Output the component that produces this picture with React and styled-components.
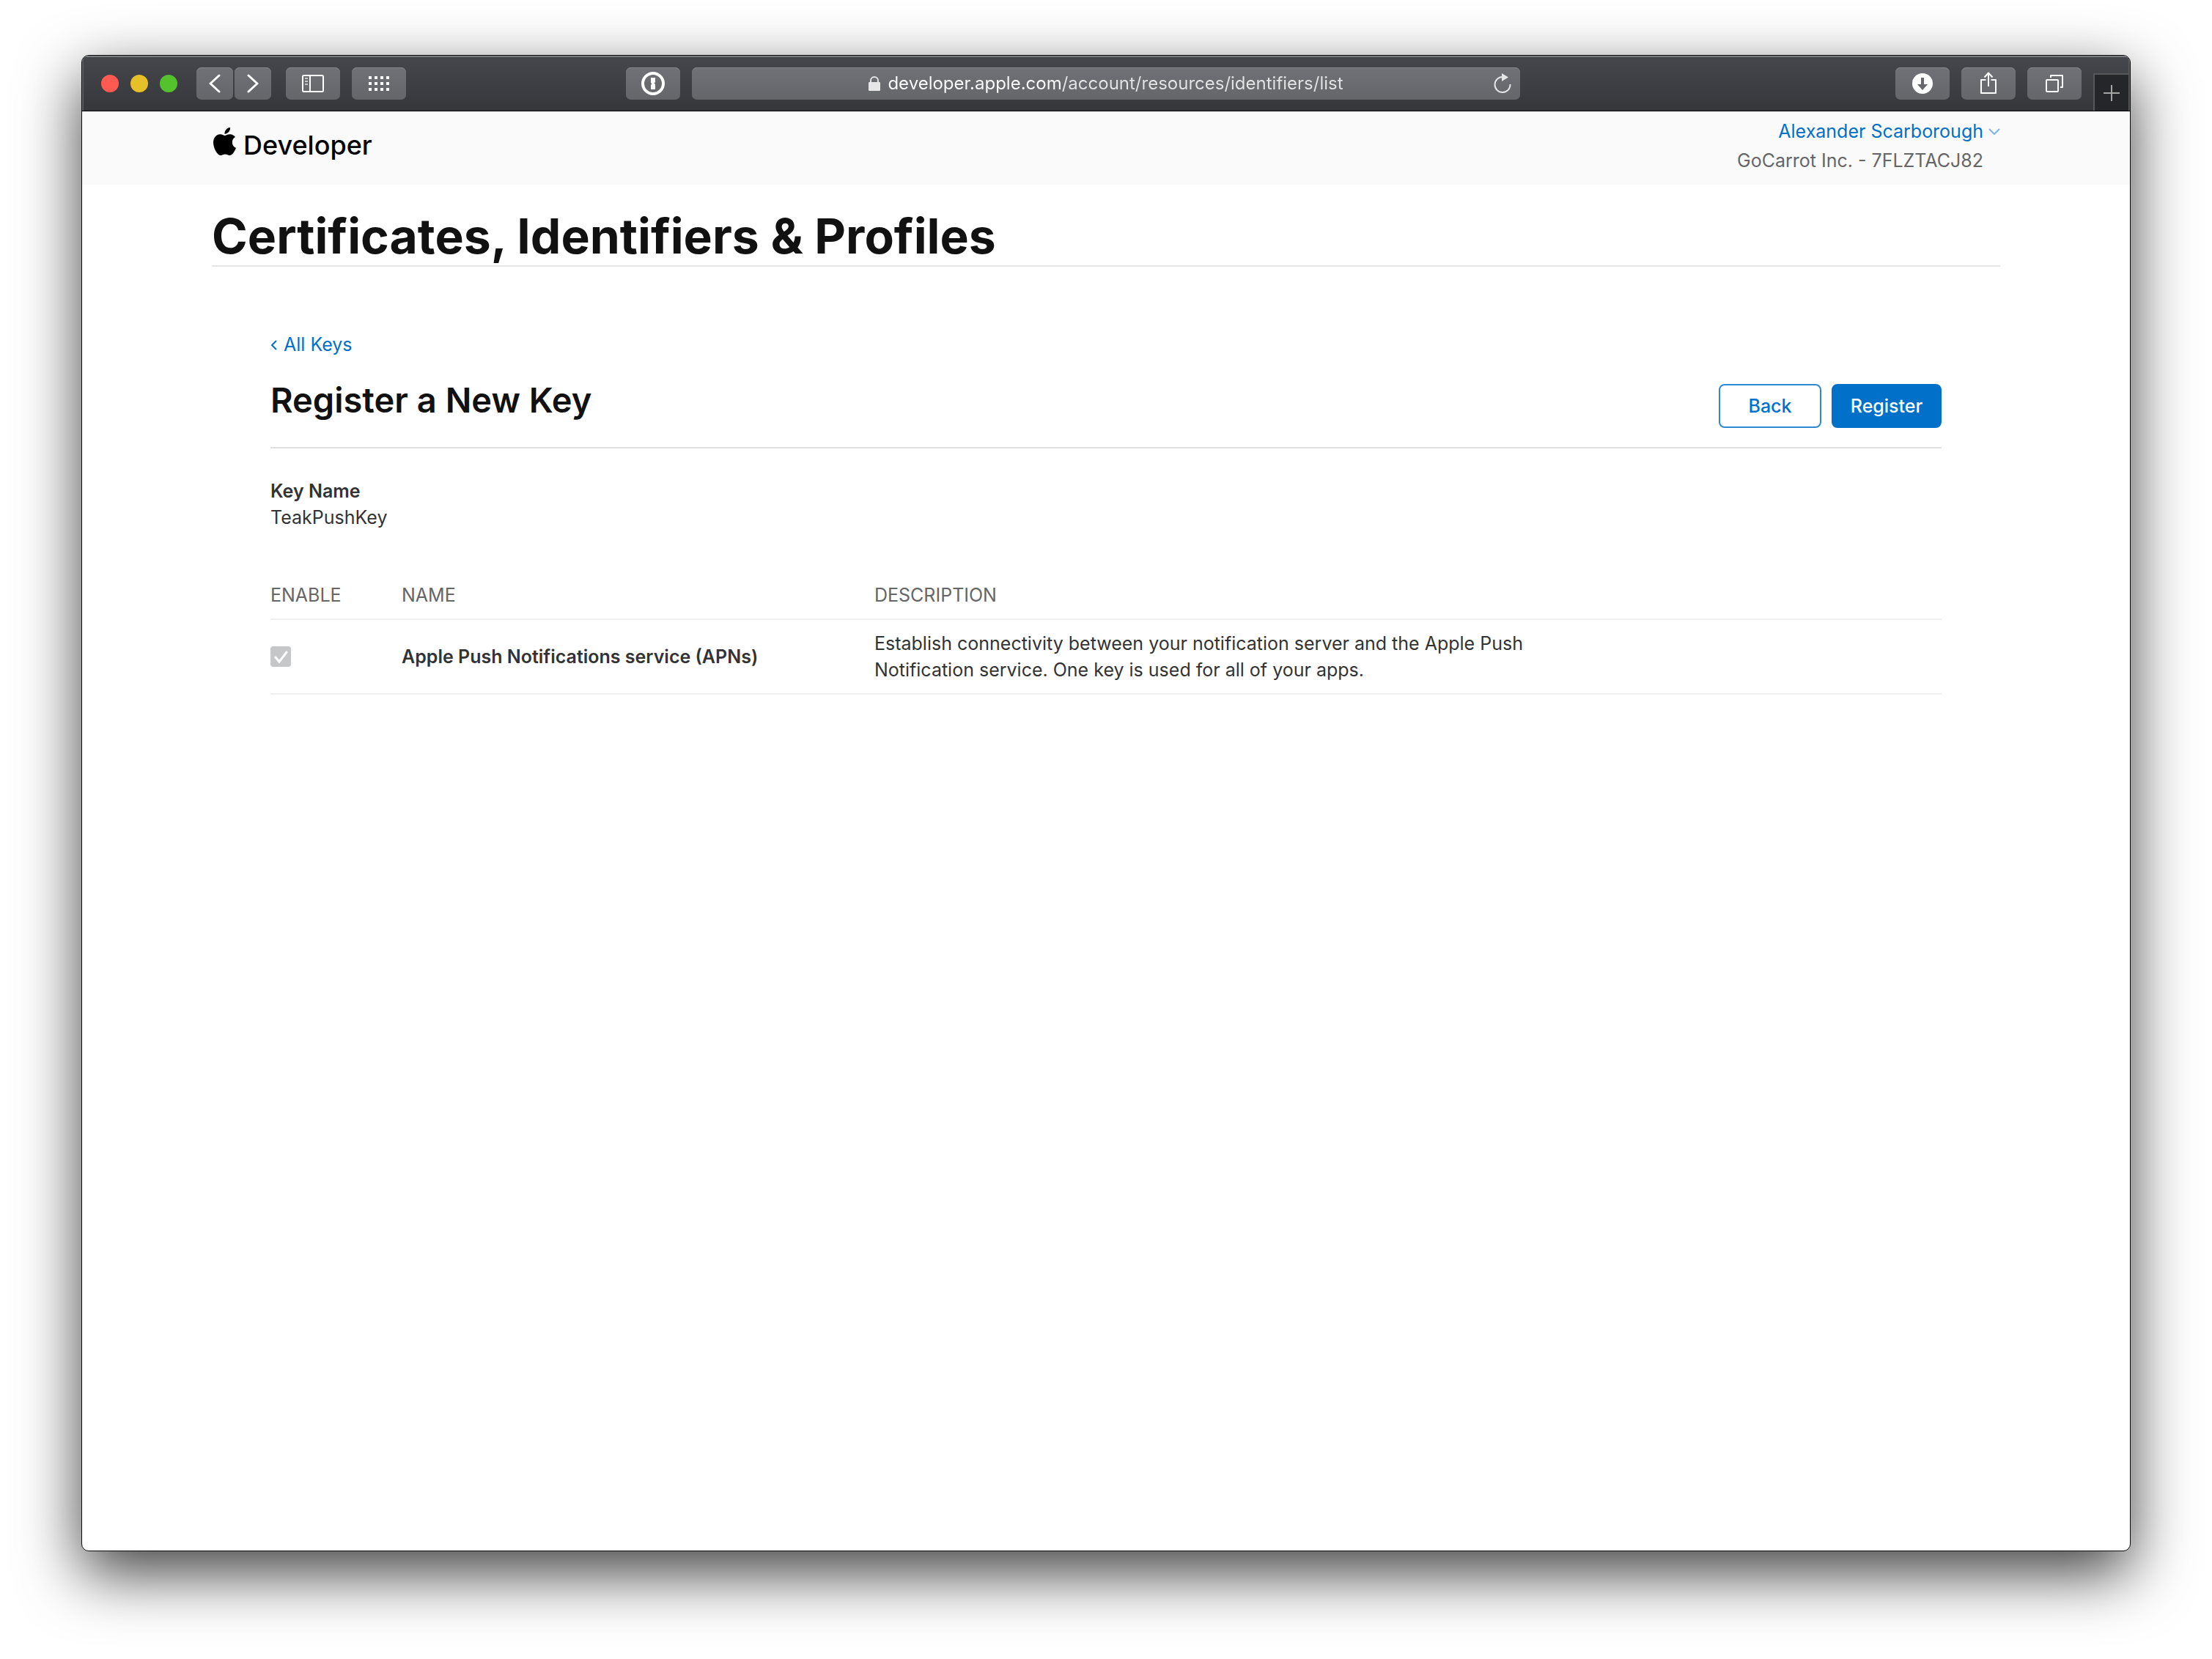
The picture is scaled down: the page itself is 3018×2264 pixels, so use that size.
import React from "react";
import styled, { createGlobalStyle, css } from "styled-components";

const GlobalStyle = createGlobalStyle`
  *, *::before, *::after { box-sizing: border-box; }
  body {
    margin: 0;
    background: #fff;
    color: #333;
    font-family: Inter, "Liberation Sans", sans-serif;
    font-size: 25px;
    line-height: 36px;
  }
  button, input { font: inherit; }
  h1, h2, p { margin: 0; }
`;

const Desktop = styled.div`
  display: flex;
  min-height: 100vh;
  padding: 75px 111px 147px;
  overflow: hidden;
`;

const Window = styled.div`
  display: flex;
  flex: 1;
  flex-direction: column;
  min-width: 0;
  overflow: hidden;
  border: 1px solid #0a0a0a;
  border-radius: 10px;
  background: #fff;
  box-shadow: 0 30px 84px rgba(0, 0, 0, 0.75);
`;

const Toolbar = styled.div`
  display: grid;
  grid-template-columns: 1fr minmax(0, 1130px) 1fr;
  column-gap: 16px;
  height: 76px;
  border-bottom: 1px solid #000;
  background: linear-gradient(#46474c, #36373b);
  box-shadow: inset 0 2px #7b7c7f, inset 2px 0 #5b5c60, inset -2px 0 #5b5c60;
`;

const ToolGroup = styled.div`
  display: flex;
  align-items: center;
  align-self: start;
  gap: 16px;
  padding-top: 16px;
  padding-left: 26px;
`;

const TrafficLights = styled.div`
  display: flex;
  gap: 16px;
  margin-right: 10px;
`;

const Light = styled.button`
  width: 24px;
  height: 24px;
  padding: 0;
  border: 0;
  border-radius: 50%;
  background: ${(p) => p.$color};
`;

const NavPair = styled.div`
  display: flex;
  gap: 2px;
  margin-right: 4px;
`;

const raised = css`
  border: 0;
  border-radius: 7px;
  background: linear-gradient(#707176, #65666a);
  box-shadow: inset 0 1px #87888b;
`;

const ToolButton = styled.button`
  ${raised}
  display: flex;
  flex: none;
  align-items: center;
  justify-content: center;
  width: ${(p) => (p.$narrow ? 50 : 74)}px;
  height: 44px;
  margin-left: ${(p) => (p.$pushed ? "auto" : "0")};
  padding: 0;
`;

const AddressBar = styled.div`
  ${raised}
  display: grid;
  grid-template-columns: 1fr auto 1fr;
  align-items: center;
  height: 44px;
  margin-top: 16px;
  padding: 0 12px;
`;

const AddressField = styled.label`
  display: flex;
  grid-column: 2;
  align-items: center;
  gap: 10px;
`;

const AddressInput = styled.input`
  field-sizing: content;
  padding: 0;
  border: 0;
  outline: 0;
  background: linear-gradient(90deg, #fff 38%, #e4e4e5 38%);
  background-clip: text;
  color: transparent;
  font-size: 24px;
  line-height: 32px;
`;

const ReloadButton = styled.button`
  display: flex;
  justify-self: end;
  padding: 0;
  border: 0;
  background: none;
`;

const RightTools = styled.div`
  display: flex;
  justify-content: flex-end;
  gap: 16px;
`;

const NewTabButton = styled.button`
  display: flex;
  align-items: center;
  justify-content: center;
  align-self: flex-end;
  width: 50px;
  height: 51px;
  padding: 0;
  border: solid #57585a;
  border-width: 2px 2px 0;
  background: #252629;
`;

const SiteHeader = styled.header`
  background: #fafafa;
`;

const Container = styled.div`
  width: 100%;
  max-width: 2440px;
  margin: 0 auto;
`;

const HeaderRow = styled(Container)`
  display: flex;
  justify-content: space-between;
  height: 100px;
`;

const Brand = styled.a`
  display: flex;
  align-items: flex-start;
  gap: 10px;
  padding: 22px 0 0 2px;
  color: #000;
  font-size: 36px;
  font-weight: 500;
  line-height: 48px;
  text-decoration: none;
`;

const Account = styled.div`
  display: grid;
  grid-template-columns: auto 16px;
  align-content: start;
  align-items: center;
  column-gap: 7px;
  padding-top: 7px;
  font-size: 25px;
  line-height: 40px;
  text-align: right;
`;

const AccountButton = styled.button`
  display: grid;
  grid-column: 1 / -1;
  grid-template-columns: subgrid;
  align-items: center;
  padding: 0;
  border: 0;
  background: none;
  color: #0070c9;
  text-align: right;
`;

const Team = styled.span`
  color: #666;
`;

const PageTitle = styled.h1`
  padding-top: 30px;
  border-bottom: 2px solid #e6e6e6;
  color: #111;
  font-size: 66px;
  font-weight: 700;
  line-height: 80px;
`;

const Panel = styled.main`
  padding: 88px 80px 0;
`;

const BackLink = styled.a`
  display: flex;
  align-items: center;
  gap: 9px;
  width: fit-content;
  color: #0070c9;
  text-decoration: none;
`;

const PanelHeader = styled.div`
  display: flex;
  justify-content: space-between;
  padding: 28px 0 26px;
  border-bottom: 2px solid #e0e0e0;
`;

const PanelTitle = styled.h2`
  color: #111;
  font-size: 47px;
  font-weight: 600;
  line-height: 60px;
`;

const Actions = styled.div`
  display: flex;
  gap: 14px;
  padding-top: 8px;
`;

const ActionButton = styled.button`
  min-width: ${(p) => (p.$primary ? 150 : 140)}px;
  height: 60px;
  padding: 0 20px;
  border: 2px solid ${(p) => (p.$primary ? "#0070c9" : "#2e89d3")};
  border-radius: 8px;
  background: ${(p) => (p.$primary ? "#0070c9" : "#fff")};
  color: ${(p) => (p.$primary ? "#fff" : "#0070c9")};
  font-weight: 500;
`;

const KeyDetails = styled.dl`
  margin: 40px 0 0;

  dt { font-weight: 600; }
  dd { margin: 0; }
`;

const ServicesTable = styled.table`
  width: 100%;
  margin-top: 54px;
  border-collapse: collapse;
  table-layout: fixed;
  text-align: left;
`;

const Column = styled.col`
  width: ${(p) => p.$width || "auto"};
`;

const HeadCell = styled.th`
  padding: 16px 0 14px;
  border-bottom: 2px solid #f1f1f1;
  color: #666;
  font-weight: 400;
  text-transform: uppercase;
`;

const Cell = styled.td`
  padding: 14px 0;
  border-bottom: 2px solid #f1f1f1;
`;

const ServiceName = styled.label`
  font-weight: 600;
`;

const Description = styled.p`
  max-width: 920px;
`;

const CheckWrap = styled.span`
  display: grid;
  width: 28px;
  height: 28px;

  > * { grid-area: 1 / 1; }
  svg { pointer-events: none; }
`;

const Checkbox = styled.input`
  appearance: none;
  width: 28px;
  height: 28px;
  margin: 0;
  border-radius: 4px;
  background: #c6c7c9;
`;

const Icon = ({ w, h, children, ...rest }) => (
  <svg width={w} height={h} viewBox={`0 0 ${w} ${h}`} fill="none" aria-hidden="true" {...rest}>
    {children}
  </svg>
);

const ChevronIcon = ({ right }) => (
  <Icon w={16} h={26} stroke="#fff" strokeWidth="3" strokeLinecap="round" strokeLinejoin="round">
    <path d={right ? "M2 2l12 11L2 24" : "M14 2L2 13l12 11"} />
  </Icon>
);

const SidebarIcon = () => (
  <Icon w={30} h={24}>
    <rect x="1" y="1" width="28" height="22" rx="1.5" stroke="#fff" strokeWidth="2" />
    <path d="M11 1v22" stroke="#fff" strokeWidth="2" />
    <path d="M4 5h4M4 9h4M4 13h4" stroke="#c4c5c7" strokeWidth="2" />
  </Icon>
);

const GridIcon = () => (
  <Icon w={28} h={20} fill="#fff">
    {[0, 8, 16].map((y) =>
      [0, 8, 16, 24].map((x) => <rect key={`${x}-${y}`} x={x} y={y} width="4" height="4" />)
    )}
  </Icon>
);

const PasswordIcon = () => (
  <Icon w={32} h={32}>
    <circle cx="16" cy="16" r="14" stroke="#fff" strokeWidth="4" />
    <path d="M13 8h6v6l-1.500 1.500L19 17v7h-6v-6l1.500-1.500L13 15z" fill="#fff" />
  </Icon>
);

const LockIcon = () => (
  <Icon w={16} h={20}>
    <path d="M3 9V6a5 5 0 0 1 10 0v3" stroke="#e6e6e7" strokeWidth="2" />
    <rect y="8" width="16" height="12" rx="1" fill="#e6e6e7" />
  </Icon>
);

const ReloadIcon = () => (
  <Icon w={24} h={28}>
    <path d="M12 5A10.500 10.500 0 1 0 22.500 15" stroke="#e6e6e7" strokeWidth="2" />
    <path d="M11 0l9 5.500-9 5.500z" fill="#e6e6e7" />
  </Icon>
);

const DownloadIcon = () => (
  <Icon w={28} h={28}>
    <circle cx="14" cy="14" r="14" fill="#fff" />
    <path d="M12 6h4v9h5l-7 8-7-8h5z" fill="#66676b" />
  </Icon>
);

const ShareIcon = () => (
  <Icon w={24} h={32} stroke="#fff" strokeWidth="2" strokeLinejoin="round">
    <path d="M8.500 11H2v18h20V11h-6.500" />
    <path d="M12 20V2M6.500 7.500L12 1.500l5.500 6" />
  </Icon>
);

const TabsIcon = () => (
  <Icon w={24} h={24} stroke="#fff" strokeWidth="2" strokeLinejoin="round">
    <rect x="1" y="7" width="16" height="16" rx="1" />
    <path d="M7 4V1h16v16h-3" />
  </Icon>
);

const PlusIcon = () => (
  <Icon w={22} h={22} stroke="#a5a5a6" strokeWidth="2">
    <path d="M11 0v22M0 11h22" />
  </Icon>
);

const AppleLogo = () => (
  <svg width="31" height="38" viewBox="2.200 0 19.600 24" preserveAspectRatio="none" fill="#000" aria-hidden="true">
    <path d="M12.152 6.896c-.948 0-2.415-1.078-3.960-1.040-2.040.027-3.910 1.183-4.961 3.014-2.117 3.675-.546 9.103 1.519 12.090 1.013 1.454 2.208 3.090 3.792 3.039 1.520-.065 2.090-.987 3.935-.987 1.831 0 2.350.987 3.960.948 1.637-.026 2.676-1.480 3.676-2.948 1.156-1.688 1.636-3.325 1.662-3.415-.039-.013-3.182-1.221-3.220-4.857-.026-3.040 2.480-4.494 2.597-4.559-1.429-2.090-3.623-2.324-4.390-2.376-2-.156-3.675 1.090-4.610 1.090zM15.530 3.830c.843-1.012 1.400-2.427 1.245-3.830-1.207.052-2.662.805-3.532 1.818-.780.896-1.454 2.338-1.273 3.714 1.338.104 2.715-.688 3.559-1.701" />
  </svg>
);

export default function App() {
  return (
    <>
      <GlobalStyle />
      <Desktop>
        <Window>
          <Toolbar>
            <ToolGroup>
              <TrafficLights>
                <Light $color="#ff5a52" aria-label="Close" />
                <Light $color="#e6c029" aria-label="Minimize" />
                <Light $color="#53c22c" aria-label="Zoom" />
              </TrafficLights>
              <NavPair>
                <ToolButton $narrow aria-label="Back">
                  <ChevronIcon />
                </ToolButton>
                <ToolButton $narrow aria-label="Forward">
                  <ChevronIcon right />
                </ToolButton>
              </NavPair>
              <ToolButton aria-label="Sidebar">
                <SidebarIcon />
              </ToolButton>
              <ToolButton aria-label="Top sites">
                <GridIcon />
              </ToolButton>
              <ToolButton $pushed aria-label="Passwords">
                <PasswordIcon />
              </ToolButton>
            </ToolGroup>
            <AddressBar>
              <AddressField>
                <LockIcon />
                <AddressInput
                  type="text"
                  aria-label="Address"
                  defaultValue="developer.apple.com/account/resources/identifiers/list"
                />
              </AddressField>
              <ReloadButton aria-label="Reload">
                <ReloadIcon />
              </ReloadButton>
            </AddressBar>
            <RightTools>
              <ToolGroup>
                <ToolButton aria-label="Downloads">
                  <DownloadIcon />
                </ToolButton>
                <ToolButton aria-label="Share">
                  <ShareIcon />
                </ToolButton>
                <ToolButton aria-label="Show tabs">
                  <TabsIcon />
                </ToolButton>
              </ToolGroup>
              <NewTabButton aria-label="New tab">
                <PlusIcon />
              </NewTabButton>
            </RightTools>
          </Toolbar>

          <SiteHeader>
            <HeaderRow>
              <Brand href="#developer">
                <AppleLogo />
                Developer
              </Brand>
              <Account>
                <AccountButton>
                  <span>Alexander Scarborough</span>
                  <Icon w={16} h={10} stroke="#7db5e2" strokeWidth="2">
                    <path d="M1 2l7 7 7-7" />
                  </Icon>
                </AccountButton>
                <Team>GoCarrot Inc. - 7FLZTACJ82</Team>
              </Account>
            </HeaderRow>
          </SiteHeader>

          <Container>
            <PageTitle>Certificates, Identifiers &amp; Profiles</PageTitle>
            <Panel>
              <BackLink href="#keys">
                <Icon w={9} h={16} stroke="#0070c9" strokeWidth="2">
                  <path d="M8 3L2 9l6 6" />
                </Icon>
                All Keys
              </BackLink>
              <PanelHeader>
                <PanelTitle>Register a New Key</PanelTitle>
                <Actions>
                  <ActionButton type="button">Back</ActionButton>
                  <ActionButton type="button" $primary>
                    Register
                  </ActionButton>
                </Actions>
              </PanelHeader>
              <KeyDetails>
                <dt>Key Name</dt>
                <dd>TeakPushKey</dd>
              </KeyDetails>
              <ServicesTable>
                <colgroup>
                  <Column $width="179px" />
                  <Column $width="645px" />
                  <Column />
                </colgroup>
                <thead>
                  <tr>
                    <HeadCell scope="col">Enable</HeadCell>
                    <HeadCell scope="col">Name</HeadCell>
                    <HeadCell scope="col">Description</HeadCell>
                  </tr>
                </thead>
                <tbody>
                  <tr>
                    <Cell>
                      <CheckWrap>
                        <Checkbox type="checkbox" id="apns" defaultChecked disabled />
                        <Icon w={28} h={28} stroke="#fff" strokeWidth="3" strokeLinecap="round">
                          <path d="M7 15l5 6L22 8" />
                        </Icon>
                      </CheckWrap>
                    </Cell>
                    <Cell>
                      <ServiceName htmlFor="apns">Apple Push Notifications service (APNs)</ServiceName>
                    </Cell>
                    <Cell>
                      <Description>
                        Establish connectivity between your notification server and the Apple Push
                        Notification service. One key is used for all of your apps.
                      </Description>
                    </Cell>
                  </tr>
                </tbody>
              </ServicesTable>
            </Panel>
          </Container>
        </Window>
      </Desktop>
    </>
  );
}
